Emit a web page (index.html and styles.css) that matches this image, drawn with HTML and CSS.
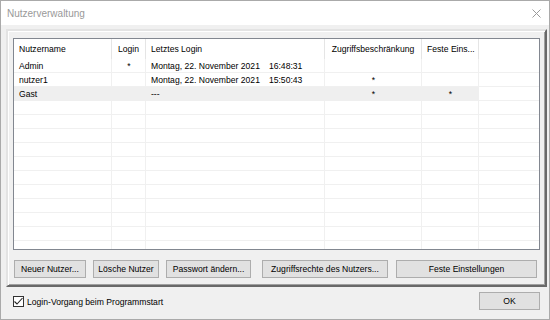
FILE: index.html
```html
<!DOCTYPE html>
<html lang="de">
<head>
  <meta charset="UTF-8">
  <title>Nutzerverwaltung</title>
  <link rel="stylesheet" href="styles.css">
</head>
<body>
  <div class="window">
    <div class="titlebar">
      <span class="title">Nutzerverwaltung</span>
      <svg class="close" width="9" height="9" viewBox="0 0 9 9">
        <path d="M0.5 0.5 L8.5 8.5 M8.5 0.5 L0.5 8.5" stroke="#9a9a9a" stroke-width="1" fill="none"/>
      </svg>
    </div>

    <div class="content">
      <div class="panel">
        <!-- user list -->
        <div class="list">
          <div class="list-head">
            <div class="col">Nutzername</div>
            <div class="col center">Login</div>
            <div class="col">Letztes Login</div>
            <div class="col center">Zugriffsbeschränkung</div>
            <div class="col center">Feste Eins...</div>
            <div class="col filler"></div>
          </div>
          <div class="list-body">
            <div class="row">
              <div class="col">Admin</div>
              <div class="col center">*</div>
              <div class="col">Montag, 22. November 2021<span class="time">16:48:31</span></div>
              <div class="col center"></div>
              <div class="col center"></div>
            </div>
            <div class="row">
              <div class="col">nutzer1</div>
              <div class="col center"></div>
              <div class="col">Montag, 22. November 2021<span class="time">15:50:43</span></div>
              <div class="col center">*</div>
              <div class="col center"></div>
            </div>
            <div class="row selected">
              <div class="col">Gast</div>
              <div class="col center"></div>
              <div class="col">---</div>
              <div class="col center">*</div>
              <div class="col center">*</div>
            </div>
          </div>
        </div>

        <div class="buttons">
          <button class="btn btn-new">Neuer Nutzer...</button>
          <button class="btn btn-delete">Lösche Nutzer</button>
          <button class="btn btn-password">Passwort ändern...</button>
          <button class="btn btn-rights">Zugriffsrechte des Nutzers...</button>
          <button class="btn btn-fixed">Feste Einstellungen</button>
        </div>
      </div>

      <div class="footer">
        <label class="check">
          <span class="box">
            <svg width="11" height="11" viewBox="0 0 11 11">
              <path d="M1.5 5.5 L4 8 L9.5 2" stroke="#222" stroke-width="1.1" fill="none"/>
            </svg>
          </span>
          Login-Vorgang beim Programmstart
        </label>
        <button class="btn btn-ok">OK</button>
      </div>
    </div>
  </div>
</body>
</html>
```

FILE: styles.css
```css
body {
  margin: 0;
  font-family: "Liberation Sans", Arial, sans-serif;
  font-size: 8.6px;
  color: #000;
}

.window {
  width: 550px;
  height: 320px;
  box-sizing: border-box;
  border: 1px solid #aaaaaa;
  display: flex;
  flex-direction: column;
  background-color: #f0f0f0;
}

.titlebar {
  height: 24px;
  background-color: #fff;
  display: flex;
  align-items: center;
  justify-content: space-between;
  padding: 0 8px 0 6px;
}

.title {
  font-size: 10px;
  color: #999;
}

.close {
  margin-top: 1px;
}

.content {
  flex: 1;
  padding: 4px 2px 0 5px;
}

/* raised 3D panel */
.panel {
  height: 258px;
  box-sizing: border-box;
  border-style: solid;
  border-width: 2px;
  border-color: #e3e3e3 #696969 #696969 #e3e3e3;
  box-shadow: inset 1px 1px 0 #fff, inset -1px -1px 0 #a0a0a0;
  padding: 7px 5px 0 5px;
}

.list {
  height: 212px;
  box-sizing: border-box;
  border: 1px solid #828790;
  background-color: #fff;
  overflow: hidden;
  display: flex;
  flex-direction: column;
}

.list-head,
.row {
  display: grid;
  grid-template-columns: 98px 34px 179px 97px 57px 1fr;
}

.col {
  box-sizing: border-box;
  padding: 0 5px;
  white-space: nowrap;
  overflow: hidden;
}

.center {
  text-align: center;
}

.list-head {
  height: 20px;
  line-height: 20px;
}

.list-head .col {
  border-right: 1px solid #e5e5e5;
}

.list-head .filler {
  border-right: none;
}

.list-body {
  flex: 1;
  background:
    linear-gradient(#f0f0f0, #f0f0f0) 97px 0 / 1px 100% no-repeat,
    linear-gradient(#f0f0f0, #f0f0f0) 131px 0 / 1px 100% no-repeat,
    linear-gradient(#f0f0f0, #f0f0f0) 310px 0 / 1px 100% no-repeat,
    linear-gradient(#f0f0f0, #f0f0f0) 407px 0 / 1px 100% no-repeat,
    linear-gradient(#f0f0f0, #f0f0f0) 464px 0 / 1px 100% no-repeat,
    repeating-linear-gradient(to bottom, transparent 0 13px, #f0f0f0 13px 14px);
}

.row {
  height: 14px;
  line-height: 14px;
}

.row.selected {
  width: 465px;
  background-color: #efefef;
}

.time {
  margin-left: 9px;
}

.buttons {
  display: flex;
  margin-top: 10px;
  padding-left: 1px;
}

.btn {
  height: 18px;
  box-sizing: border-box;
  padding: 0;
  border: 1px solid #adadad;
  background-color: #e1e1e1;
  font-family: inherit;
  font-size: 8.6px;
  color: #000;
}

.btn-new { width: 72px; }
.btn-delete { width: 66px; margin-left: 7px; }
.btn-password { width: 85px; margin-left: 7px; }
.btn-rights { width: 126px; margin-left: 11px; }
.btn-fixed { width: 141px; margin-left: 8px; }

.footer {
  display: flex;
  align-items: center;
  justify-content: space-between;
  padding: 5px 7px 0 7px;
}

.check {
  display: flex;
  align-items: center;
  gap: 3px;
  margin-top: 1px;
}

.box {
  width: 11px;
  height: 11px;
  box-sizing: border-box;
  border: 1px solid #333;
  background-color: #fff;
  display: flex;
}

.box svg {
  margin: -1px;
}

.btn-ok {
  width: 61px;
}
```
